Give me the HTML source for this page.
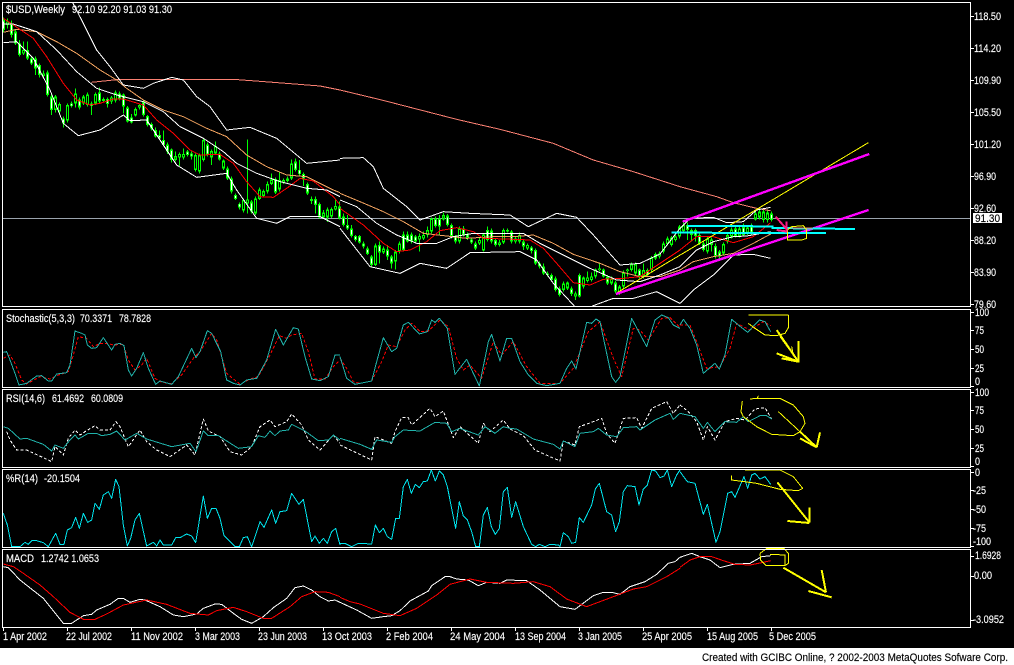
<!DOCTYPE html>
<html><head><meta charset="utf-8"><title>$USD Weekly</title>
<style>
html,body{margin:0;padding:0;background:#fff;width:1014px;height:665px;overflow:hidden}
svg{display:block;shape-rendering:crispEdges}
svg *{vector-effect:non-scaling-stroke}
polyline,path{fill:none;stroke-linejoin:round}
text{font-family:"Liberation Sans",sans-serif;font-size:11px;fill:#fff;stroke:#fff;stroke-width:.15;shape-rendering:auto}
text.k{fill:#000;stroke:#000}
.wick{stroke:#0f0;stroke-width:1}
.body{stroke:#0f0;stroke-width:3}
.cw{stroke:#fff;stroke-width:1}
.ck{stroke:#000;stroke-width:1}
.w{stroke:#fff;stroke-width:1}
.r{stroke:#f00;stroke-width:1}
.o{stroke:#f4a460;stroke-width:1}
.s{stroke:#fa8072;stroke-width:1}
.t{stroke:#20b2aa;stroke-width:1}
.rd{stroke:#f00;stroke-width:1;stroke-dasharray:3 2}
.wd{stroke:#fff;stroke-width:1;stroke-dasharray:3 2}
.c{stroke:#00e5ee;stroke-width:1}
.y1{stroke:#ff0;stroke-width:1}
.y2{stroke:#ff0;stroke-width:2}
.m{stroke:#f0f;stroke-width:2.4}
.cy{stroke:#0ff;stroke-width:2}
.p{stroke:#ff1a80;stroke-width:2}
</style></head><body>
<svg width="1014" height="665" viewBox="0 0 1014 665" xmlns="http://www.w3.org/2000/svg">
<rect x="0" y="0" width="1014" height="648" fill="#000"/>
<path d="M3 218.5H971" stroke="#9aa3ad" stroke-width="1"/>

<!-- candles part 1 -->
<g transform="scale(.33333)">
<path class="wick" d="M10 52V98M22 55V85M34 62V112M46 88V135M58 120V170M70 125V165M82 125V180M94 170V195M106 170V225M118 190V232M130 212V235M142 212V290M154 280V345M166 285V338M178 308V340M190 350V382M202 310V368M214 305V322M226 265V322M238 292V328M250 285V315M262 278V320M274 305V345M286 278V315M298 262V310M310 292V308M322 292V322M334 288V312M346 272V308M358 275V302M370 280V340M382 318V368M394 342V370M406 322V350M418 310V328M430 300V350M442 345V380M454 368V392M466 382V412M478 392V420M490 392V440M502 428V462M514 445V488M526 455V485M538 458V498M550 445V478M562 450V470M574 455V478M586 460V515M598 460V520M610 415V485M622 428V470M634 448V495M646 425V465M658 455V482M670 478V510M682 500V540M694 530V580M706 580V600M718 608V628M730 595V638M742 418V640M754 600V640M766 590V645M778 562V600M790 568V592M802 545V580M814 520V555M826 532V582M838 515V575M850 535V552M862 530V548M874 478V540M886 475V515M898 480V528M910 518V558M922 548V585M934 590V612M946 590V640M958 608V656M970 630V656M982 622V666M994 622V654M1006 595V632M1018 605V658"/>
<path class="body" d="M10 60V90M22 65V75M34 70V105M46 95V130M58 130V165M70 150V160M82 150V175M94 175V190M106 175V205M118 195V225M130 220V228M142 218V285M154 290V330M166 290V330M178 312V335M190 355V370M202 315V362M214 310V318M226 280V310M238 298V322M250 290V310M262 283V315M274 310V318M286 282V310M298 277V305M310 297V303M322 297V312M334 293V305M346 277V302M358 280V296M370 283V320M382 322V365M394 352V367M406 327V347M418 315V322M430 305V345M442 348V375M454 372V385M466 390V410M478 405V415M490 420V435M502 433V455M514 448V480M526 468V480M538 462V472M550 462V472M562 455V465M574 460V470M586 465V510M598 465V515M610 420V480M622 433V465M634 453V472M646 438V460M658 460V478M670 482V505M682 505V535M694 535V575M706 585V597M718 612V622M730 600V632M742 598V610M754 605V635M766 595V640M778 568V597M790 573V588M802 552V575M814 538V552M826 537V578M838 540V568M850 540V548M862 536V543M874 490V535M886 485V510M898 510V522M910 522V535M922 552V580M934 597V603M946 597V615M958 612V652M970 637V652M982 628V652M994 627V650M1006 618V628M1018 620V655"/>
<path class="cw" d="M10 65V85M34 75V100M46 100V127M58 135V160M82 155V170M94 178V187M106 180V200M118 200V220M142 223V280M154 295V325M190 358V367M214 312V316M238 303V317M274 312V316M298 282V300M322 300V309M358 284V292M370 288V315M382 327V360M394 355V364M430 310V340M442 353V370M454 375V382M466 395V405M478 408V412M490 423V432M502 438V450M514 453V475M562 458V462M574 463V467M622 438V460M658 465V473M682 510V530M694 540V570M706 588V594M718 614V620M754 610V630M826 542V573M886 490V505M898 512V520M910 525V532M922 557V575M946 602V610M958 617V647M1018 625V650"/>
<path class="ck" d="M22 68V72M70 153V157M130 223V225M166 295V325M178 317V330M202 320V357M226 285V305M250 295V305M262 288V310M286 287V305M334 296V302M346 282V297M406 332V342M418 318V320M526 473V475M538 465V469M550 465V469M586 470V505M598 470V510M610 425V475M634 458V467M646 443V455M670 487V500M730 605V627M742 601V607M766 600V635M778 573V592M790 578V583M802 557V570M814 543V547M838 545V563M850 543V545M874 495V530M970 642V647M982 633V647M994 632V645M1006 621V625"/>
</g>
<!-- candles part 2 -->
<g transform="translate(340 100) scale(.33333)">
<path class="wick" d="M10 340V380M22 345V390M34 375V412M46 405V425M58 405V430M70 425V445M82 440V465M94 465V500M106 430V498M118 425V490M130 440V462M142 435V480M154 465V505M166 450V508M178 425V460M190 395V455M202 395V428M214 398V430M226 405V430M238 400V455M250 395V420M262 380V412M274 352V400M286 350V382M298 345V405M310 338V362M322 342V380M334 370V415M346 405V430M358 380V430M370 378V410M382 398V420M394 412V432M406 425V450M418 412V435M430 400V455M442 380V425M454 385V430M466 415V440M478 420V440M490 385V432M502 385V398M514 390V430M526 410V430M538 398V430M550 420V450M562 430V450M574 438V460M586 445V495M598 485V505M610 490V525M622 515V530M634 520V545M646 530V575M658 560V590M670 545V575M682 545V570M694 560V588M706 575V600M718 520V592M730 530V565M742 515V547M754 518V545M766 505V535M778 488V515M790 505V532M802 525V555M814 530V555M826 542V580M838 555V585M850 512V565M862 505V530M874 488V515M886 488V525M898 505V535M910 490V535M922 505V528M934 468V515M946 458V480M958 455V475M970 425V460M982 410V436M994 408V440M1006 405V424M1018 375V415"/>
<path class="body" d="M10 350V375M22 375V385M34 385V408M46 408V420M58 408V428M70 430V440M82 445V462M94 470V495M106 437V495M118 435V458M130 445V458M142 448V470M154 470V490M166 455V485M178 430V455M190 403V450M202 403V425M214 403V425M226 410V425M238 408V418M250 405V415M262 390V405M274 355V395M286 355V378M298 355V380M310 345V358M322 347V375M334 375V410M346 410V425M358 385V425M370 385V405M382 403V415M394 418V428M406 430V445M418 420V430M430 403V452M442 390V420M454 392V425M466 420V435M478 427V435M490 390V428M502 390V395M514 395V425M526 415V425M538 405V425M550 425V440M562 435V445M574 442V453M586 450V490M598 490V500M610 500V520M622 520V525M634 525V540M646 535V570M658 565V585M670 550V570M682 548V565M694 565V582M706 580V590M718 525V590M730 533V560M742 533V543M754 530V540M766 508V530M778 505V510M790 508V530M802 530V550M814 535V550M826 548V575M838 560V578M850 517V560M862 508V513M874 492V510M886 492V520M898 508V530M910 510V530M922 510V525M934 472V510M946 462V475M958 460V470M970 430V455M982 415V432M994 413V435M1006 410V420M1018 380V410"/>
<path class="cw" d="M10 355V370M22 378V382M34 390V403M46 411V417M58 413V423M70 433V437M82 450V457M94 475V490M118 440V453M142 453V465M154 475V485M190 408V445M202 408V420M214 408V420M226 413V420M286 360V373M298 360V375M322 352V370M334 380V405M346 413V420M370 390V400M382 406V410M394 421V425M406 435V440M442 395V415M454 397V420M466 425V430M514 400V420M550 430V435M574 445V450M586 455V485M598 493V497M610 505V515M634 530V535M646 540V565M658 570V580M694 570V577M718 530V585M790 513V525M802 535V545M826 553V570M898 513V525M922 515V520"/>
<path class="ck" d="M106 442V490M130 450V453M166 460V480M178 435V450M238 411V415M250 408V412M262 395V400M274 360V390M310 350V353M358 390V420M418 423V427M430 408V447M478 430V432M490 395V423M526 418V422M538 410V420M562 438V442M670 555V565M682 553V560M706 583V587M730 538V555M742 536V540M754 533V537M766 513V525M778 507V508M814 540V545M838 565V573M850 522V555M862 510V511M874 497V505M886 497V515M910 515V525M934 477V505M946 467V470M958 463V467M970 435V450M982 420V427M994 418V430M1006 413V417M1018 385V405"/>
</g>
<g transform="translate(600 130) scale(.33333)">
<path class="wick" d="M250 278V308M262 278V330M274 295V335M286 295V335M298 310V345M310 335V365M322 320V370M334 322V365M346 340V385M358 360V388M370 338V375M382 310V340M394 292V325M406 285V322M418 285V322M430 280V320M442 285V315M454 280V315M466 240V272M478 232V268M490 235V278M502 240V278M514 245V275"/>
<path class="body" d="M250 285V303M262 285V300M274 300V315M286 300V318M298 315V340M310 340V360M322 325V365M334 328V345M346 348V380M358 365V380M370 342V370M382 315V335M394 298V320M406 295V318M418 295V318M430 290V315M442 292V310M454 288V310M466 250V268M478 245V262M490 245V270M502 248V270M514 250V270"/>
<path class="cw" d="M262 290V295M286 305V313M298 320V335M310 345V355M346 353V375M358 370V375M406 300V313M430 295V310M454 293V305M514 255V265"/>
<path class="ck" d="M250 290V298M274 305V310M322 330V360M334 333V340M370 347V365M382 320V330M394 303V315M418 300V313M442 297V305M466 255V263M478 250V257M490 250V265M502 253V265"/>
</g>

<!-- main moving averages and bands -->
<g transform="scale(.33333)">
<polyline class="s" points="274,247 360,238 700,238 820,247 960,258 1020,270 1145,300"/>
<polyline class="o" points="10,97 50,88 110,95 170,125 230,160 300,210 350,240 380,265 430,300 490,330 550,350 620,385 680,410 740,465 800,500 860,525 920,530 1000,570 1020,578"/>
<polyline class="r" points="10,55 40,75 100,115 140,170 190,250 230,300 270,315 300,310 340,297 370,297 430,315 470,360 520,400 570,450 600,465 660,463 700,490 740,545 780,590 820,592 860,565 900,535 940,543 1000,590 1020,615"/>
<polyline class="w" points="10,72 40,72 110,95 170,150 230,215 290,265 350,285 430,305 490,335 540,380 610,415 670,455 710,490 770,520 840,545 920,565 980,570 1020,590"/>
<polyline class="w" points="218,8 250,70 290,150 330,200 370,255 430,265 460,250 515,232 550,240 590,290 630,320 680,390 750,382 830,415 920,490 1020,480"/>
<polyline class="w" points="10,128 50,125 100,175 150,270 190,370 235,407 300,390 370,345 390,362 440,360 500,450 530,495 590,532 680,520 710,570 770,655 830,670 870,650 960,650 1020,680"/>
</g>
<g transform="translate(340 100) scale(.33333)">
<polyline class="s" points="125,0 350,58 480,88 640,130 760,180 880,215 1020,260"/>
<polyline class="o" points="0,280 60,305 130,335 190,365 250,400 320,408 380,415 460,410 520,410 580,405 640,430 700,463 780,490 840,515 900,530 960,530 1020,510"/>
<polyline class="r" points="0,325 70,375 130,430 170,455 210,450 260,425 300,392 350,383 400,395 430,415 500,417 570,420 610,445 650,490 700,548 750,555 790,538 850,535 900,530 960,490 1020,450"/>
<polyline class="w" points="0,300 50,320 110,370 170,405 230,430 290,430 340,410 400,400 550,400 600,430 680,470 750,505 830,540 900,545 960,525 1020,500"/>
<polyline class="w" points="0,175 70,173 100,200 130,265 200,320 240,360 310,335 390,340 510,345 565,380 650,340 710,352 760,405 840,495 900,490 960,462 1020,385"/>
<polyline class="w" points="0,385 90,500 180,520 240,490 320,505 390,458 540,455 590,480 640,550 703,618"/>
<polyline class="w" points="757,618 820,595 880,595 950,575 1020,610"/>
</g>
<g transform="translate(600 130) scale(.33333)">
<polyline class="s" points="240,170 350,200 400,218 470,235 512,242"/>
<polyline class="o" points="240,420 280,395 340,380 400,370 460,340 512,312"/>
<polyline class="r" points="240,360 290,320 340,320 400,338 460,320 512,278"/>
<polyline class="w" points="240,410 290,360 340,335 400,320 440,318 512,305"/>
<polyline class="w" points="240,295 270,265 340,262 380,278 430,275 470,240 512,232"/>
<polyline class="w" points="240,520 280,480 340,435 400,375 460,373 512,385"/>
<polyline class="y1" points="48,490 805,38"/>
<polyline class="m" points="248,275 808,72"/>
<polyline class="m" points="48,492 806,240"/>
<polyline class="cy" points="262,288 520,289"/>
<polyline class="cy" points="515,294 765,297"/>
<polyline class="cy" points="215,308 678,309"/>
<polyline class="s" points="575,294 638,294"/>
<polyline class="y1" points="562,300 575,290 610,287 620,300 620,325 605,330 562,330 562,300"/>
<polyline class="p" points="527,260 562,300"/>
<polyline class="p" points="560,275 560,305"/>
<polyline class="p" points="530,300 562,305"/>
</g>

<!-- stochastic and RSI -->
<g transform="translate(0 305) scale(.33333)">
<polyline class="rd" points="10,160 30,150 45,175 65,225 80,237 120,215 150,222 170,212 205,200 220,150 235,95 260,100 280,125 300,115 320,115 340,120 370,118 385,165 405,195 425,180 440,160 465,220 485,232 515,236 545,210 580,160 600,140 635,85 650,105 680,205 720,238 750,222 775,215 810,150 838,92 860,100 875,90 905,85 925,140 945,222 975,222 1000,185 1020,165"/>
<polyline class="t" points="10,142 20,140 30,165 45,205 57,240 80,235 110,213 125,212 145,228 155,228 170,207 200,203 210,180 225,78 245,85 255,90 262,120 275,130 290,128 310,98 335,135 345,118 360,115 372,122 385,195 395,213 410,190 430,143 445,190 467,238 480,228 515,238 535,215 575,130 588,158 600,140 622,77 635,85 662,140 680,225 700,235 720,240 740,225 770,220 800,165 827,73 850,120 880,68 895,72 915,155 935,222 960,227 985,215 1005,150 1020,150"/>
<polyline class="wd" points="20,380 30,405 50,435 80,435 130,458 155,470 165,425 190,450 205,400 225,375 240,390 255,380 285,362 300,375 330,375 348,350 360,365 385,425 420,375 440,410 470,435 510,455 560,420 585,450 610,342 625,378 660,395 690,440 725,450 755,425 780,365 810,345 825,365 860,350 875,327 905,360 925,405 960,435 1000,390 1020,415"/>
<polyline class="t" points="10,365 25,370 60,402 80,400 130,418 155,438 165,420 190,430 210,405 225,390 235,402 265,385 290,385 305,392 330,388 350,378 375,405 410,385 440,402 515,425 570,415 588,440 610,378 625,392 655,392 715,430 755,425 775,392 795,397 810,378 825,392 840,378 865,375 875,358 915,378 955,407 985,405 1000,390 1020,405"/>
</g>
<g transform="translate(340 305) scale(.33333)">
<polyline class="rd" points="0,160 20,190 40,230 60,235 95,228 125,170 145,120 170,125 195,75 215,55 240,80 265,78 300,45 325,65 350,160 370,195 390,180 425,220 460,110 485,150 520,110 560,185 600,235 660,235 700,190 745,80 780,50 820,160 845,215 880,70 900,75 925,105 965,40 990,38 1020,68"/>
<polyline class="t" points="0,155 20,220 45,238 95,228 110,170 130,98 155,140 170,130 190,60 205,52 238,87 262,80 275,45 285,52 298,40 322,70 345,208 380,163 418,243 445,110 455,88 480,168 500,100 515,100 540,170 565,210 590,235 620,242 660,235 680,190 695,168 708,192 740,52 755,55 768,42 780,50 800,145 815,215 827,232 840,215 875,40 920,125 945,45 965,30 985,38 1000,60 1020,70"/>
<polyline class="wd" points="0,420 95,465 105,395 155,415 165,380 185,338 205,338 215,360 270,310 285,335 310,318 340,398 360,365 415,415 430,355 450,380 490,345 510,372 550,392 585,435 660,468 670,408 705,420 718,365 760,350 785,340 800,385 825,415 850,340 890,338 905,370 935,310 980,290 1000,325 1020,300"/>
<polyline class="t" points="0,400 60,418 95,433 110,405 155,412 165,395 190,375 240,378 285,352 320,355 335,380 360,370 415,390 435,365 465,385 490,365 510,370 530,372 580,402 640,418 660,432 670,408 705,425 720,385 760,380 775,370 800,390 830,395 850,368 890,365 900,375 945,345 990,325 1000,343 1020,325"/>
</g>
<g transform="translate(680 305) scale(.33333)">
<polyline class="rd" points="0,60 30,60 50,110 80,190 120,185 150,130 170,55 210,75 250,50 272,62"/>
<polyline class="t" points="0,60 10,43 30,70 50,120 70,205 105,175 118,192 135,150 155,43 175,60 203,82 238,45 255,50 272,80"/>
<polyline class="wd" points="0,300 25,320 50,350 70,405 82,365 105,405 135,350 170,340 195,345 225,312 255,308 275,342"/>
<polyline class="t" points="0,325 45,335 70,370 82,352 105,380 135,350 170,352 190,335 205,350 240,332 260,332 275,342"/>
<polyline class="y1" points="205,30 325,30 325,68 315,85 290,92 255,90 225,70 205,55"/>
<polyline class="y2" points="290,75 355,170"/>
<polyline class="y1" points="300,95 340,150 335,125"/>
<polyline class="y2" points="355,108 355,172"/>
<polyline class="y2" points="290,145 355,170"/>
<polyline class="y2" points="305,160 355,170"/>
<polyline class="y1" points="210,282 232,280 235,272"/>
<polyline class="y1" points="232,280 300,280 340,300 370,335 375,355 360,380 340,392 275,388 230,365 190,335 183,320 187,288"/>
<polyline class="y1" points="295,320 360,380"/>
<polyline class="y2" points="360,380 410,427"/>
<polyline class="y2" points="360,400 410,427"/>
<polyline class="y2" points="410,427 420,382"/>
</g>

<!-- %R and MACD -->
<g transform="translate(0 465) scale(.33333)">
<polyline class="c" points="10,145 22,180 35,245 60,245 75,232 85,238 95,227 110,227 130,233 145,245 167,205 180,238 192,238 202,195 215,188 227,157 238,190 250,145 263,172 275,165 285,115 298,133 310,90 325,80 335,100 347,43 357,65 370,180 382,243 392,220 405,165 418,145 440,243 460,232 470,243 480,225 490,240 515,240 527,218 540,218 560,207 575,213 587,233 610,93 622,160 635,130 648,130 660,160 672,212 695,235 705,245 718,245 730,218 742,215 755,245 780,170 792,187 815,135 827,175 840,140 860,137 875,85 897,118 910,103 935,230 945,213 958,235 970,220 982,235 995,200 1007,190 1020,240"/>
<polyline class="w" points="10,305 25,308 60,345 130,400 190,475 215,475 250,452 275,448 290,435 330,418 355,400 370,400 390,412 420,403 435,405 480,425 520,450 550,455 590,447 610,430 645,417 665,418 700,445 725,463 755,475 790,455 820,428 860,400 885,368 910,363 935,375 960,395 985,408 1005,405 1020,412"/>
<polyline class="r" points="10,297 40,305 70,325 120,360 160,395 210,442 250,463 285,463 320,447 370,420 440,405 500,418 570,445 625,450 650,437 700,427 740,440 790,460 815,460 870,425 905,395 945,380 985,382 1020,395"/>
</g>
<g transform="translate(340 465) scale(.33333)">
<polyline class="c" points="0,235 15,235 35,245 55,235 95,237 106,180 118,203 130,190 142,215 155,223 167,160 178,160 190,65 202,43 214,85 226,58 238,68 250,50 262,48 274,15 286,48 298,18 310,30 322,65 347,190 358,110 370,153 382,165 395,200 407,245 418,245 430,150 442,127 454,185 466,208 478,190 490,80 502,67 515,157 527,110 550,185 575,238 587,245 598,238 615,245 630,238 655,240 660,245 670,203 685,215 695,235 707,232 718,158 730,172 755,120 766,72 778,55 800,140 815,150 827,200 838,170 850,80 862,62 885,65 897,120 910,72 922,60 935,15 947,18 960,38 972,33 982,15 995,65 1010,30 1020,15"/>
<polyline class="w" points="0,412 50,435 95,460 130,455 155,452 180,437 210,408 265,378 275,362 315,335 330,335 350,342 385,345 415,362 440,352 480,355 500,345 560,347 600,375 660,425 705,433 760,392 790,382 815,382 840,388 870,365 915,350 950,328 985,295 1005,290 1020,277"/>
<polyline class="r" points="0,397 30,410 60,417 130,445 180,452 230,430 290,390 330,358 390,342 440,352 520,355 580,350 630,365 680,402 740,425 820,395 880,372 920,365 980,335 1020,310"/>
</g>
<g transform="translate(680 465) scale(.33333)">
<polyline class="c" points="0,20 22,50 45,55 70,148 82,118 108,232 120,200 143,85 155,80 165,97 192,35 203,70 215,30 225,25 240,42 255,35 272,58"/>
<polyline class="w" points="0,277 35,265 60,275 90,285 120,308 160,298 210,295 245,275 272,272"/>
<polyline class="r" points="0,307 30,285 60,275 95,275 130,287 165,298 210,300 245,293 272,287"/>
<polyline class="y1" points="195,15 300,15 340,35 368,70 355,77 300,73 230,55 155,45 155,32"/>
<polyline class="y2" points="292,52 388,172"/>
<polyline class="y2" points="388,172 388,127"/>
<polyline class="y2" points="322,168 388,174"/>
<polyline class="y1" points="240,265 260,250 312,250 325,265 325,295 315,302 258,302 242,285 240,265"/>
<polyline class="y1" points="270,268 315,270 315,300"/>
<polyline class="y2" points="310,308 438,382"/>
<polyline class="y2" points="425,315 438,382"/>
<polyline class="y2" points="385,378 455,397"/>
</g>

<!-- panel borders -->
<rect x="2.5" y="2.5" width="968" height="304" fill="none" stroke="#fff"/>
<rect x="2.5" y="309.5" width="968" height="78" fill="none" stroke="#fff"/>
<rect x="2.5" y="389.5" width="968" height="78" fill="none" stroke="#fff"/>
<rect x="2.5" y="469.5" width="968" height="78" fill="none" stroke="#fff"/>
<rect x="2.5" y="549.5" width="968" height="78" fill="none" stroke="#fff"/>

<!-- axis ticks -->
<path stroke="#fff" stroke-width="1" d="M971 16.5h3M971 48.5h3M971 80.5h3M971 112.5h3M971 144.5h3M971 176.5h3M971 208.5h3M971 240.5h3M971 272.5h3M971 304.5h3M971 312.5h3M971 330.5h3M971 349.5h3M971 368.5h3M971 386.5h3M971 392.5h3M971 410.5h3M971 429.5h3M971 448.5h3M971 466.5h3M971 472.5h3M971 490.5h3M971 509.5h3M971 528.5h3M971 546.5h3M971 556.5h3M971 576.5h3M971 620.5h3M3.5 628v3M67.5 628v3M131.5 628v3M195.5 628v3M259.5 628v3M323.5 628v3M387.5 628v3M451.5 628v3M515.5 628v3M579.5 628v3M643.5 628v3M707.5 628v3M771.5 628v3"/>

<!-- texts -->
<text x="6" y="13" textLength="59" lengthAdjust="spacingAndGlyphs">$USD,Weekly</text>
<text x="72" y="13" textLength="100" lengthAdjust="spacingAndGlyphs">92.10 92.20 91.03 91.30</text>
<text x="6" y="322" textLength="69" lengthAdjust="spacingAndGlyphs">Stochastic(5,3,3)</text>
<text x="80" y="322" textLength="32" lengthAdjust="spacingAndGlyphs">70.3371</text>
<text x="119" y="322" textLength="32" lengthAdjust="spacingAndGlyphs">78.7828</text>
<text x="6" y="402" textLength="39" lengthAdjust="spacingAndGlyphs">RSI(14,6)</text>
<text x="52" y="402" textLength="32" lengthAdjust="spacingAndGlyphs">61.4692</text>
<text x="91" y="402" textLength="32" lengthAdjust="spacingAndGlyphs">60.0809</text>
<text x="6" y="482" textLength="32" lengthAdjust="spacingAndGlyphs">%R(14)</text>
<text x="44" y="482" textLength="36" lengthAdjust="spacingAndGlyphs">-20.1504</text>
<text x="6" y="562" textLength="28" lengthAdjust="spacingAndGlyphs">MACD</text>
<text x="41" y="562" textLength="58" lengthAdjust="spacingAndGlyphs">1.2742 1.0653</text>

<g>
<text x="974" y="20" textLength="27" lengthAdjust="spacingAndGlyphs">118.50</text>
<text x="974" y="52" textLength="27" lengthAdjust="spacingAndGlyphs">114.20</text>
<text x="974" y="84" textLength="27" lengthAdjust="spacingAndGlyphs">109.90</text>
<text x="974" y="116" textLength="27" lengthAdjust="spacingAndGlyphs">105.50</text>
<text x="974" y="148" textLength="27" lengthAdjust="spacingAndGlyphs">101.20</text>
<text x="974" y="180" textLength="22" lengthAdjust="spacingAndGlyphs">96.90</text>
<text x="974" y="212" textLength="22" lengthAdjust="spacingAndGlyphs">92.60</text>
<text x="974" y="244" textLength="22" lengthAdjust="spacingAndGlyphs">88.20</text>
<text x="974" y="276" textLength="22" lengthAdjust="spacingAndGlyphs">83.90</text>
<text x="974" y="308" textLength="22" lengthAdjust="spacingAndGlyphs">79.60</text>
<rect x="973" y="213" width="29" height="10" fill="#fff"/>
<text class="k" x="975" y="222" textLength="25" lengthAdjust="spacingAndGlyphs">91.30</text>

<text x="975" y="316" textLength="14" lengthAdjust="spacingAndGlyphs">100</text>
<text x="975" y="334" textLength="9" lengthAdjust="spacingAndGlyphs">75</text>
<text x="975" y="353" textLength="9" lengthAdjust="spacingAndGlyphs">50</text>
<text x="975" y="372" textLength="9" lengthAdjust="spacingAndGlyphs">25</text>
<text x="975" y="385" textLength="5" lengthAdjust="spacingAndGlyphs">0</text>
<text x="975" y="396" textLength="14" lengthAdjust="spacingAndGlyphs">100</text>
<text x="975" y="414" textLength="9" lengthAdjust="spacingAndGlyphs">75</text>
<text x="975" y="433" textLength="9" lengthAdjust="spacingAndGlyphs">50</text>
<text x="975" y="452" textLength="9" lengthAdjust="spacingAndGlyphs">25</text>
<text x="975" y="465" textLength="5" lengthAdjust="spacingAndGlyphs">0</text>
<text x="975" y="476" textLength="5" lengthAdjust="spacingAndGlyphs">0</text>
<text x="973" y="494" textLength="13" lengthAdjust="spacingAndGlyphs">-25</text>
<text x="973" y="513" textLength="13" lengthAdjust="spacingAndGlyphs">-50</text>
<text x="973" y="532" textLength="13" lengthAdjust="spacingAndGlyphs">-75</text>
<text x="973" y="545" textLength="18" lengthAdjust="spacingAndGlyphs">-100</text>
<text x="975" y="559" textLength="26" lengthAdjust="spacingAndGlyphs">1.6928</text>
<text x="974" y="579" textLength="18" lengthAdjust="spacingAndGlyphs">0.00</text>
<text x="973" y="623" textLength="31" lengthAdjust="spacingAndGlyphs">-3.0952</text>
</g>

<g>
<text x="3" y="640" textLength="44" lengthAdjust="spacingAndGlyphs">1 Apr 2002</text>
<text x="66" y="640" textLength="46" lengthAdjust="spacingAndGlyphs">22 Jul 2002</text>
<text x="131" y="640" textLength="52" lengthAdjust="spacingAndGlyphs">11 Nov 2002</text>
<text x="195" y="640" textLength="45" lengthAdjust="spacingAndGlyphs">3 Mar 2003</text>
<text x="258" y="640" textLength="49" lengthAdjust="spacingAndGlyphs">23 Jun 2003</text>
<text x="322" y="640" textLength="50" lengthAdjust="spacingAndGlyphs">13 Oct 2003</text>
<text x="386" y="640" textLength="47" lengthAdjust="spacingAndGlyphs">2 Feb 2004</text>
<text x="450" y="640" textLength="55" lengthAdjust="spacingAndGlyphs">24 May 2004</text>
<text x="515" y="640" textLength="51" lengthAdjust="spacingAndGlyphs">13 Sep 2004</text>
<text x="578" y="640" textLength="44" lengthAdjust="spacingAndGlyphs">3 Jan 2005</text>
<text x="642" y="640" textLength="50" lengthAdjust="spacingAndGlyphs">25 Apr 2005</text>
<text x="707" y="640" textLength="51" lengthAdjust="spacingAndGlyphs">15 Aug 2005</text>
<text x="769" y="640" textLength="47" lengthAdjust="spacingAndGlyphs">5 Dec 2005</text>
</g>
<text class="k" x="702" y="661" textLength="306" lengthAdjust="spacingAndGlyphs">Created with GCIBC Online, ? 2002-2003 MetaQuotes Sofware Corp.</text>
</svg>
</body></html>
